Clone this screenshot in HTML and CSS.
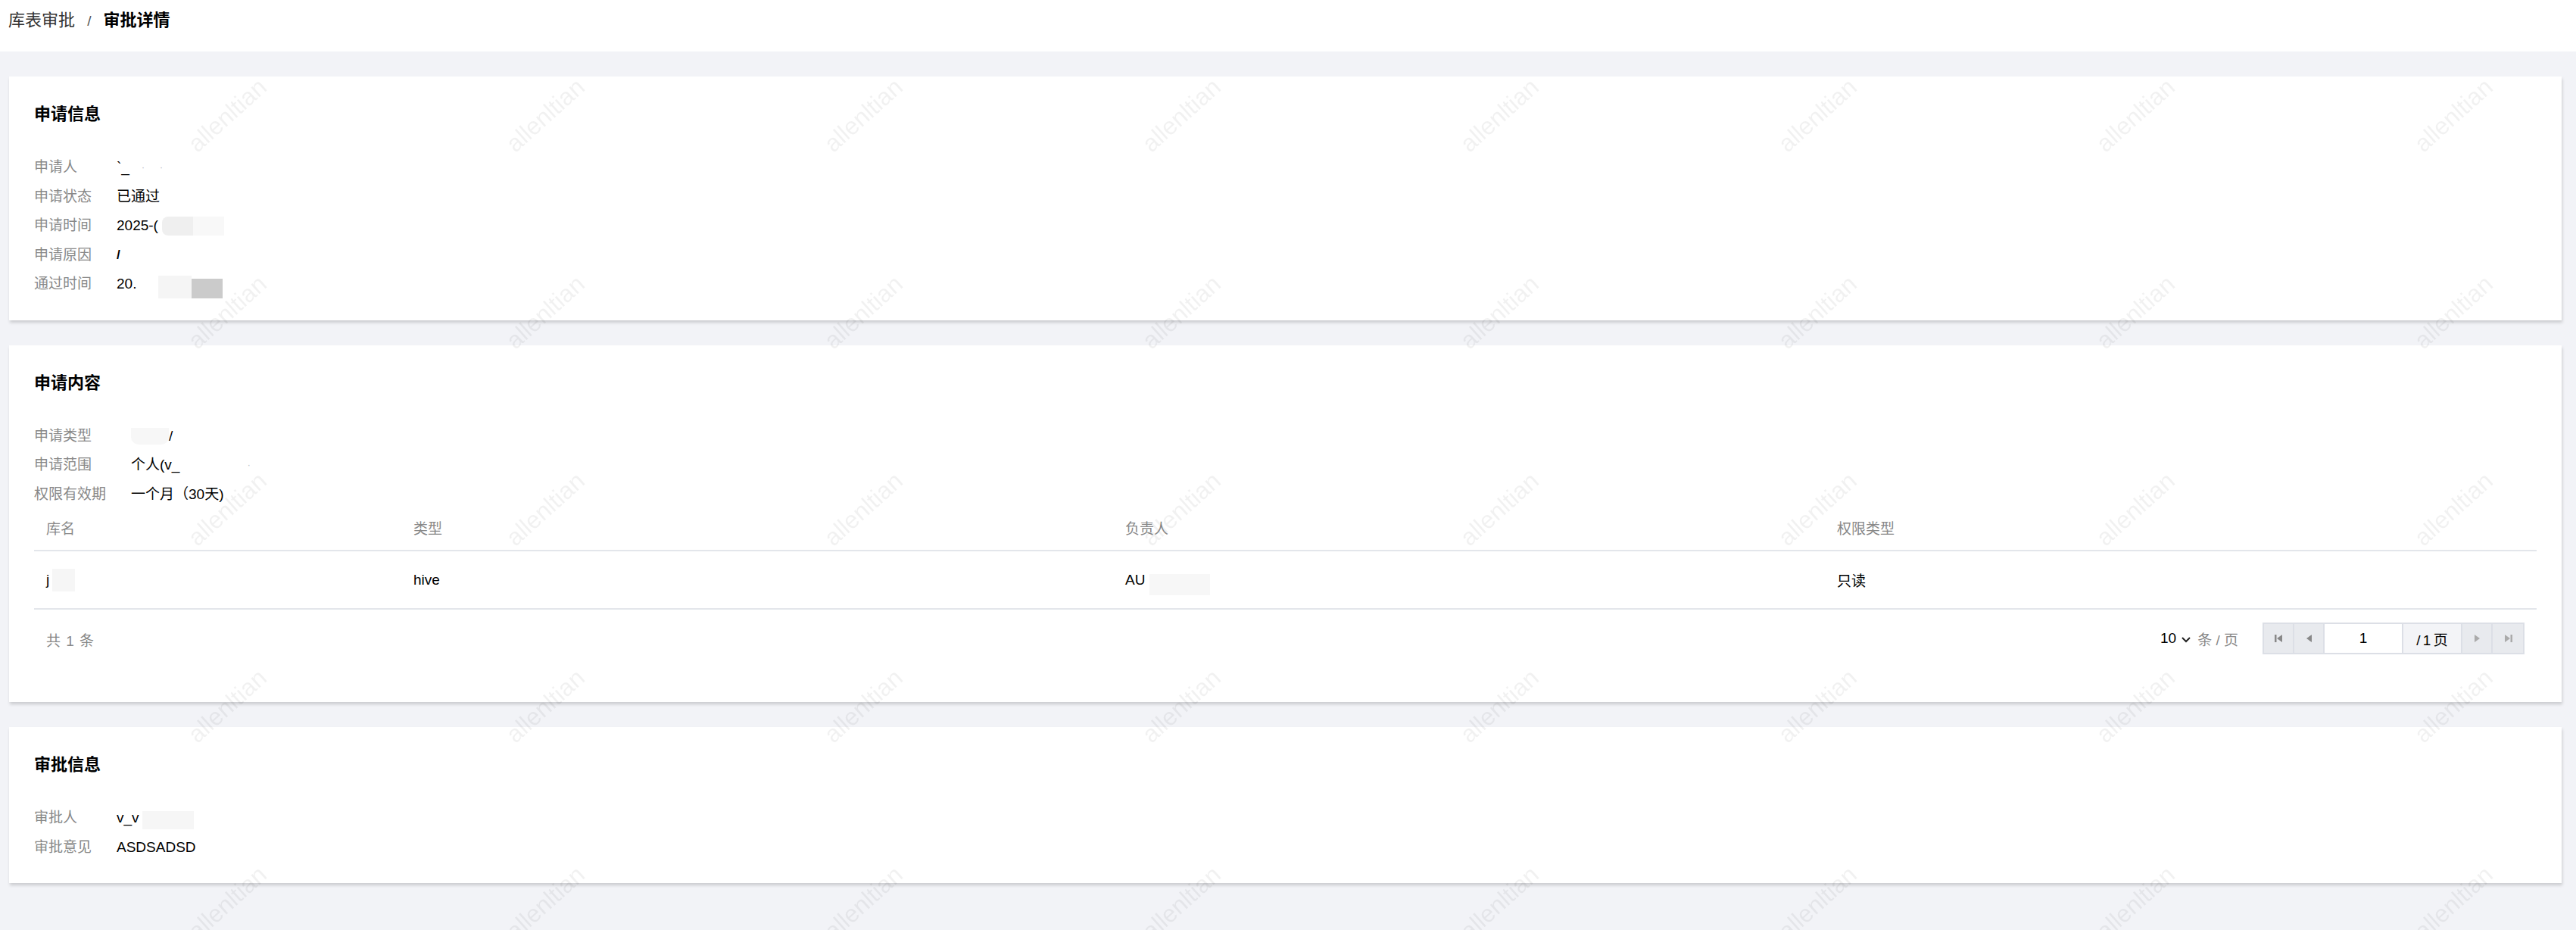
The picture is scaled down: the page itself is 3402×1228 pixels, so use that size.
FILE: index.html
```html
<!DOCTYPE html>
<html lang="zh-CN">

<head>
	<meta charset="UTF-8" />
	<title>审批详情</title>
	<link rel="stylesheet" href="styles.css">
</head>

<body>
	<div class="page-head">
		<span class="crumb">库表审批</span>
		<span class="crumb-sep">/</span>
		<span class="crumb-current">审批详情</span>
	</div>

	<div class="page-body">
		<section class="card">
			<h3 class="card-title">申请信息</h3>
			<dl class="info-list">
				<dt>申请人</dt>
				<dd><span class="faint-mark">`_</span><span class="faint-dots">·&nbsp;&nbsp;&nbsp;&nbsp;&nbsp;&nbsp;·</span></dd>
				<dt>申请状态</dt>
				<dd>已通过</dd>
				<dt>申请时间</dt>
				<dd>2025-(<span class="mask mask-a"></span><span class="mask mask-b"></span></dd>
				<dt>申请原因</dt>
				<dd><span class="stroke-mark">/</span></dd>
				<dt>通过时间</dt>
				<dd>20.<span class="mask mask-c"></span><span class="mask mask-dark"></span></dd>
			</dl>
		</section>

		<section class="card">
			<h3 class="card-title">申请内容</h3>
			<dl class="info-list">
				<dt>申请类型</dt>
				<dd><span class="mask mask-d"></span>/</dd>
				<dt>申请范围</dt>
				<dd>个人(v_<span class="faint-dots">&nbsp;&nbsp;&nbsp;&nbsp;&nbsp;&nbsp;&nbsp;&nbsp;&nbsp;&nbsp;&nbsp;&nbsp;&nbsp;&nbsp;&nbsp;&nbsp;&nbsp;&nbsp;&nbsp;&nbsp;&nbsp;&nbsp;·</span></dd>
				<dt>权限有效期</dt>
				<dd>一个月（30天)</dd>
			</dl>

			<div class="data-table">
				<div class="table-head">
					<div class="cell">库名</div>
					<div class="cell">类型</div>
					<div class="cell">负责人</div>
					<div class="cell">权限类型</div>
				</div>
				<div class="table-row">
					<div class="cell">j<span class="mask mask-e"></span></div>
					<div class="cell">hive</div>
					<div class="cell">AU<span class="mask mask-f"></span></div>
					<div class="cell">只读</div>
				</div>
			</div>

			<div class="pager">
				<div class="pager-total">共 1 条</div>
				<div class="pager-right">
					<div class="page-size">
						<span class="page-size-num">10</span>
						<svg class="chevron" width="14" height="10" viewBox="0 0 14 10">
							<polyline points="2,3 7,8 12,3" fill="none" stroke="#222" stroke-width="2" />
						</svg>
						<span class="page-size-unit">条 / 页</span>
					</div>
					<div class="pager-box">
						<div class="pager-btn">
							<svg width="11" height="12" viewBox="0 0 11 12">
								<rect x="0" y="1" width="2.5" height="10" fill="#888" />
								<polygon points="10,1 10,11 3,6" fill="#888" />
							</svg>
						</div>
						<div class="pager-btn">
							<svg width="9" height="12" viewBox="0 0 9 12">
								<polygon points="8,1 8,11 1,6" fill="#888" />
							</svg>
						</div>
						<div class="pager-input">1</div>
						<div class="pager-count">/ 1 页</div>
						<div class="pager-btn">
							<svg width="9" height="12" viewBox="0 0 9 12">
								<polygon points="1,1 1,11 8,6" fill="#aaa" />
							</svg>
						</div>
						<div class="pager-btn">
							<svg width="11" height="12" viewBox="0 0 11 12">
								<polygon points="1,1 1,11 8,6" fill="#aaa" />
								<rect x="8.5" y="1" width="2.5" height="10" fill="#aaa" />
							</svg>
						</div>
					</div>
				</div>
			</div>
		</section>

		<section class="card">
			<h3 class="card-title">审批信息</h3>
			<dl class="info-list">
				<dt>审批人</dt>
				<dd>v_v<span class="mask mask-g"></span></dd>
				<dt>审批意见</dt>
				<dd>ASDSADSD</dd>
			</dl>
		</section>
	</div>

	<div class="watermark">
		<span>allenltian</span><span>allenltian</span><span>allenltian</span><span>allenltian</span><span>allenltian</span><span>allenltian</span><span>allenltian</span><span>allenltian</span>
		<span>allenltian</span><span>allenltian</span><span>allenltian</span><span>allenltian</span><span>allenltian</span><span>allenltian</span><span>allenltian</span><span>allenltian</span>
		<span>allenltian</span><span>allenltian</span><span>allenltian</span><span>allenltian</span><span>allenltian</span><span>allenltian</span><span>allenltian</span><span>allenltian</span>
		<span>allenltian</span><span>allenltian</span><span>allenltian</span><span>allenltian</span><span>allenltian</span><span>allenltian</span><span>allenltian</span><span>allenltian</span>
		<span>allenltian</span><span>allenltian</span><span>allenltian</span><span>allenltian</span><span>allenltian</span><span>allenltian</span><span>allenltian</span><span>allenltian</span>
	</div>
</body>

</html>
```

FILE: styles.css
```css
html,
body {
	margin: 0;
}

body {
	font-family: "Liberation Sans", "Noto Sans CJK SC", sans-serif;
	font-size: 19px;
	color: #000;
	background: #f2f3f7;
	min-height: 1228px;
}

.page-head {
	height: 68px;
	box-sizing: border-box;
	padding: 13px 11px 0;
	background: #fff;
	font-size: 22px;
	line-height: 28px;
}

.crumb {
	color: #333;
}

.crumb-sep {
	display: inline-block;
	margin: 0 10px;
	color: #555;
	font-size: 19px;
}

.crumb-current {
	font-weight: bold;
	color: #000;
}

.page-body {
	padding: 33px 19px 33px 12px;
}

.card {
	background: #fff;
	padding: 33px 33px 28px;
	margin-bottom: 33px;
	box-shadow: 1px 3px 4px rgba(0, 0, 0, 0.16);
}

.card-title {
	margin: 0 0 34px;
	font-size: 22px;
	line-height: 34px;
	font-weight: bold;
}

.info-list {
	display: grid;
	grid-template-columns: max-content 1fr;
	column-gap: 33px;
	margin: 0;
	line-height: 38.5px;
}

.info-list dt {
	color: #888;
}

.info-list dd {
	margin: 0;
	display: flex;
	align-items: center;
}

.mask {
	display: inline-block;
	height: 25px;
	background: #f3f3f3;
}

.mask-a {
	width: 41px;
	margin-left: 5px;
	background: #efefef;
	border-radius: 8px 0 0 8px;
}

.mask-b {
	width: 41px;
	background: #f8f8f8;
}

.mask-c {
	width: 44px;
	height: 30px;
	margin: 8px 0 0 29px;
	background: #f5f5f5;
}

.mask-dark {
	width: 41px;
	height: 26px;
	margin-top: 12px;
	background: #cbcbcb;
}

.mask-d {
	width: 50px;
	height: 22px;
	background: #f7f7f7;
	border-radius: 0 0 10px 10px;
}

.mask-e {
	width: 30px;
	height: 30px;
	margin-left: 4px;
	background: #f6f6f6;
}

.mask-f {
	width: 80px;
	height: 28px;
	margin: 12px 0 0 6px;
	background: #f7f7f7;
}

.mask-g {
	width: 68px;
	height: 24px;
	margin: 6px 0 0 4px;
	background: #f6f6f6;
}

.faint-dots {
	color: #bbb;
	font-size: 12px;
	margin-left: 16px;
}

.stroke-mark {
	font-weight: bold;
	font-size: 17px;
}

.data-table {
	border-bottom: 2px solid #e3e6eb;
}

.table-head,
.table-row {
	display: grid;
	grid-template-columns: 485px repeat(3, 1fr);
	align-items: center;
}

.table-head {
	height: 56px;
	box-sizing: border-box;
	padding-bottom: 6px;
	color: #888;
	border-bottom: 2px solid #e3e6eb;
}

.table-row {
	height: 75px;
}

.cell {
	padding: 0 16px;
	display: flex;
	align-items: center;
}

.pager {
	display: flex;
	align-items: center;
	justify-content: space-between;
	padding: 17px 16px 35px;
}

.pager-total {
	color: #888;
	word-spacing: 2px;
	padding-top: 2px;
}

.pager-right {
	display: flex;
	align-items: center;
}

.page-size {
	display: flex;
	align-items: center;
	margin-right: 32px;
}

.chevron {
	margin: 2px 8px 0 6px;
}

.page-size-unit {
	color: #888;
}

.pager-box {
	display: flex;
	height: 42px;
	box-sizing: border-box;
	border: 2px solid #dcdfe6;
}

.pager-box>div {
	display: flex;
	align-items: center;
	justify-content: center;
	box-sizing: border-box;
}

.pager-btn {
	width: 40px;
	background: #e8eaee;
	border-right: 2px solid #dcdfe6;
}

.pager-btn:last-child {
	border-right: 0;
}

.pager-input {
	width: 104px;
	background: #fff;
	border-right: 2px solid #dcdfe6;
}

.pager-count {
	width: 78px;
	background: #f3f4f7;
	border-right: 2px solid #dcdfe6;
	word-spacing: -2px;
}

.watermark {
	position: fixed;
	top: 0;
	left: 0;
	right: 0;
	bottom: 0;
	pointer-events: none;
	overflow: hidden;
	display: grid;
	grid-template-columns: repeat(8, 420px);
	grid-auto-rows: 260px;
	padding: 22px 0 0 90px;
}

.watermark span {
	display: flex;
	align-items: center;
	justify-content: center;
	transform: rotate(-42deg);
	font-size: 32px;
	color: rgba(0, 0, 0, 0.055);
	white-space: nowrap;
}
```
